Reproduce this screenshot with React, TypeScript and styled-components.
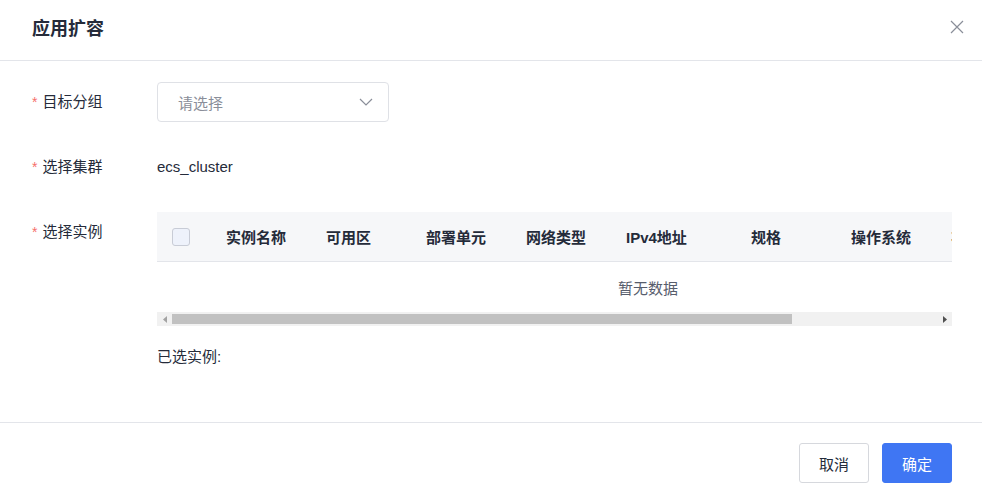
import styled, { createGlobalStyle } from "styled-components";

const GlobalStyle = createGlobalStyle`
  body {
    margin: 0;
    background: #fff;
    font-family: "Liberation Sans", "Noto Sans CJK SC", sans-serif;
    color: #252b3a;
  }
`;

const columns = [
  { title: "实例名称", width: 100 },
  { title: "可用区", width: 100 },
  { title: "部署单元", width: 100 },
  { title: "网络类型", width: 100 },
  { title: "IPv4地址", width: 125 },
  { title: "规格", width: 100 },
  { title: "操作系统", width: 100 },
  { title: "状态", width: 204 },
];

export default function App() {
  return (
    <>
      <GlobalStyle />
      <Dialog>
        <Header>
          <Title>应用扩容</Title>
          <CloseBtn aria-label="close">
            <svg width="14" height="14" viewBox="0 0 14 14">
              <path d="M1 1L13 13M13 1L1 13" stroke="#8a8e99" strokeWidth="1.2" />
            </svg>
          </CloseBtn>
        </Header>
        <Body>
          <FormItem>
            <Label>目标分组</Label>
            <Select>
              <Placeholder>请选择</Placeholder>
              <svg width="14" height="8" viewBox="0 0 14 8">
                <path d="M1 1L7 7L13 1" stroke="#8a8e99" strokeWidth="1.2" fill="none" />
              </svg>
            </Select>
          </FormItem>
          <FormItem>
            <Label>选择集群</Label>
            <Value>ecs_cluster</Value>
          </FormItem>
          <FormItem>
            <Label>选择实例</Label>
            <Control>
              <TableWrap>
                <TableInner>
                  <HeadRow>
                    <CheckCell>
                      <CheckBox />
                    </CheckCell>
                    {columns.map((c) => (
                      <HeadCell key={c.title} style={{ width: c.width }}>
                        {c.title}
                      </HeadCell>
                    ))}
                  </HeadRow>
                  <EmptyRow>暂无数据</EmptyRow>
                </TableInner>
              </TableWrap>
              <ScrollBar>
                <Arrow>
                  <svg width="4" height="7" viewBox="0 0 4 7">
                    <path d="M4 0L0 3.5L4 7Z" fill="#a3a3a3" />
                  </svg>
                </Arrow>
                <Track>
                  <Thumb />
                </Track>
                <Arrow>
                  <svg width="4" height="7" viewBox="0 0 4 7">
                    <path d="M0 0L4 3.5L0 7Z" fill="#505050" />
                  </svg>
                </Arrow>
              </ScrollBar>
              <Selected>已选实例:</Selected>
            </Control>
          </FormItem>
        </Body>
        <Footer>
          <Button>取消</Button>
          <Button $primary>确定</Button>
        </Footer>
      </Dialog>
    </>
  );
}

const Dialog = styled.div`
  width: 982px;
  height: 496px;
  display: flex;
  flex-direction: column;
  background: #fff;
  overflow: hidden;
`;

const Header = styled.div`
  height: 61px;
  display: flex;
  align-items: center;
  justify-content: space-between;
  padding: 0 18px 6px 32px;
  box-sizing: border-box;
  border-bottom: 1px solid #e3e5ea;
`;

const Title = styled.div`
  font-size: 18px;
  font-weight: 700;
  color: #252b3a;
`;

const CloseBtn = styled.button`
  border: none;
  background: none;
  padding: 0;
  display: flex;
  cursor: pointer;
`;

const Body = styled.div`
  flex: 1;
  padding: 21px 30px 0 32px;
  display: flex;
  flex-direction: column;
  gap: 25px;
`;

const FormItem = styled.div`
  display: flex;
  align-items: flex-start;
`;

const Label = styled.div`
  width: 125px;
  flex-shrink: 0;
  line-height: 40px;
  font-size: 15px;
  color: #252b3a;
  &::before {
    content: "*";
    color: #f66f6a;
    margin-right: 5px;
    font-size: 14px;
  }
`;

const Select = styled.div`
  width: 232px;
  height: 40px;
  box-sizing: border-box;
  border: 1px solid #dfe1e6;
  border-radius: 4px;
  display: flex;
  align-items: center;
  justify-content: space-between;
  padding: 0 15px 0 20px;
`;

const Placeholder = styled.span`
  font-size: 15px;
  color: #8a8e99;
`;

const Value = styled.div`
  line-height: 40px;
  font-size: 15px;
  color: #252b3a;
`;

const Control = styled.div`
  flex: 1;
  min-width: 0;
  display: flex;
  flex-direction: column;
`;

const TableWrap = styled.div`
  overflow: hidden;
  width: 100%;
`;

const TableInner = styled.div`
  width: 982px;
`;

const HeadRow = styled.div`
  display: flex;
  height: 49px;
  background: #f6f7f9;
  border-bottom: 1px solid #e3e5ea;
`;

const CheckCell = styled.div`
  width: 53px;
  flex-shrink: 0;
  display: flex;
  align-items: center;
  padding-left: 15px;
  box-sizing: border-box;
`;

const CheckBox = styled.span`
  width: 16px;
  height: 16px;
  border: 1px solid #c8ccd6;
  border-radius: 3px;
  background: #eef2fb;
`;

const HeadCell = styled.div`
  flex-shrink: 0;
  box-sizing: border-box;
  padding-left: 16px;
  display: flex;
  align-items: center;
  font-size: 15px;
  font-weight: 700;
  color: #252b3a;
  white-space: nowrap;
`;

const EmptyRow = styled.div`
  height: 50px;
  display: flex;
  align-items: center;
  justify-content: center;
  font-size: 15px;
  color: #575d6c;
`;

const ScrollBar = styled.div`
  height: 14px;
  display: flex;
  align-items: center;
  background: #f1f1f1;
`;

const Arrow = styled.div`
  width: 15px;
  height: 14px;
  display: flex;
  align-items: center;
  justify-content: center;
`;

const Track = styled.div`
  flex: 1;
  height: 10px;
`;

const Thumb = styled.div`
  width: 620px;
  height: 10px;
  background: #c1c1c1;
`;

const Selected = styled.div`
  margin-top: 21px;
  line-height: 20px;
  font-size: 15px;
  color: #252b3a;
`;

const Footer = styled.div`
  height: 74px;
  box-sizing: border-box;
  border-top: 1px solid #e3e5ea;
  display: flex;
  justify-content: flex-end;
  align-items: flex-start;
  gap: 13px;
  padding: 20px 30px 0 0;
`;

const Button = styled.button<{ $primary?: boolean }>`
  width: 70px;
  height: 40px;
  border-radius: 3px;
  font-family: inherit;
  font-size: 15px;
  cursor: pointer;
  border: 1px solid ${(p) => (p.$primary ? "#3f76f3" : "#d6d8dd")};
  background: ${(p) => (p.$primary ? "#3f76f3" : "#fff")};
  color: ${(p) => (p.$primary ? "#fff" : "#252b3a")};
`;
